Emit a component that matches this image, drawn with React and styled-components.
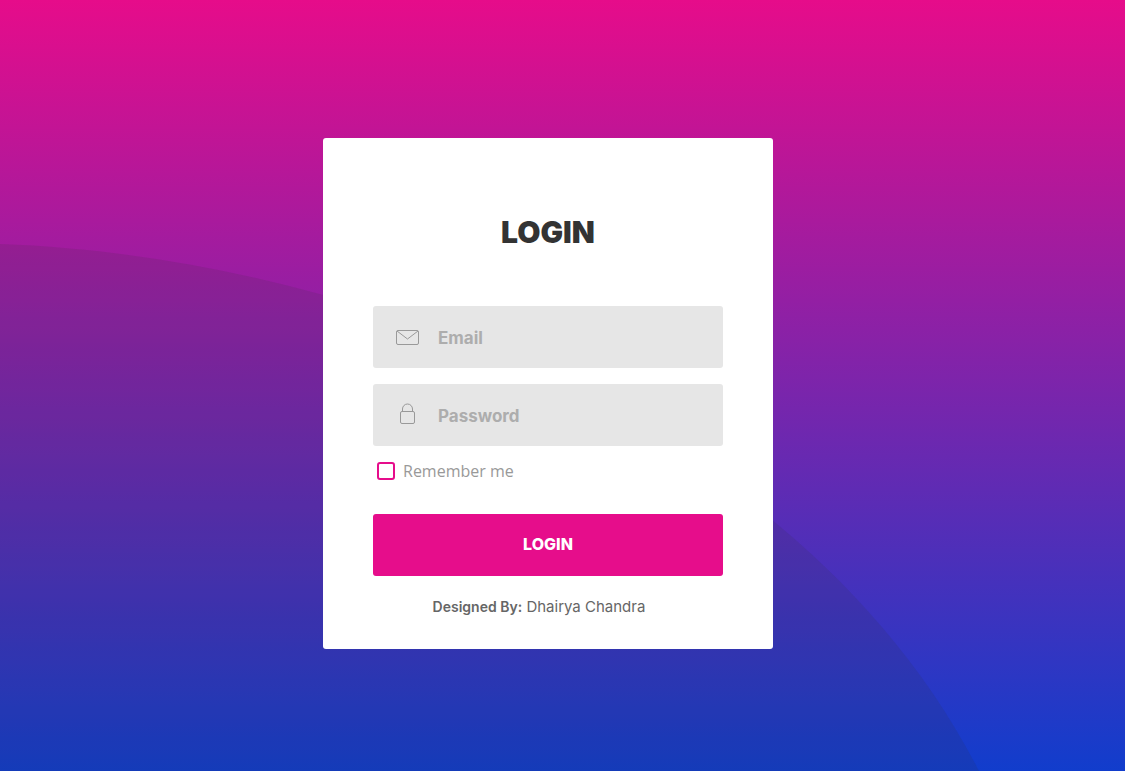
import React, { useState } from "react";
import styled, { createGlobalStyle } from "styled-components";

const GlobalStyle = createGlobalStyle`
  * {
    box-sizing: border-box;
  }

  body {
    margin: 0;
    font-family: Inter, "Liberation Sans", sans-serif;
  }
`;

const Page = styled.main`
  position: relative;
  display: flex;
  align-items: center;
  justify-content: center;
  min-height: 100vh;
  padding: 16px 29px 0 0;
  background: linear-gradient(to bottom, #e60c8a, #113dcc);
`;

const Wave = styled.svg`
  position: absolute;
  inset: 0;
  width: 100%;
  height: 100%;
`;

const Card = styled.form`
  position: relative;
  width: 100%;
  max-width: 450px;
  padding: 50px 50px 31px;
  background-color: #fff;
  border-radius: 3px;
`;

const Title = styled.h1`
  margin: 0 0 30px;
  color: #333;
  font-size: 30px;
  font-weight: 900;
  line-height: 88px;
  text-align: center;
`;

const Field = styled.label`
  display: flex;
  align-items: center;
  gap: 18px;
  height: 62px;
  margin-bottom: 16px;
  padding: 0 23px;
  background-color: #e6e6e6;
  border-radius: 3px;
`;

const FieldIcon = styled.svg`
  flex: none;
  width: 24px;
  height: 24px;
  fill: none;
  stroke: #999;
`;

const FieldInput = styled.input`
  flex: 1;
  min-width: 0;
  height: 100%;
  padding: 2px 0 0;
  border: none;
  outline: none;
  background: transparent;
  color: #666;
  font-family: inherit;
  font-size: 17px;
  font-weight: 700;

  &::placeholder {
    color: #adadad;
    opacity: 1;
  }
`;

const Remember = styled.label`
  display: flex;
  align-items: center;
  gap: 8px;
  height: 18px;
  margin-bottom: 34px;
  padding-left: 4px;
  color: #999;
  font-family: "Open Sans", sans-serif;
  font-size: 16px;
`;

const CheckBox = styled.input`
  appearance: none;
  width: 18px;
  height: 18px;
  margin: 0;
  border: 2px solid #e60d8b;
  border-radius: 3px;

  &:checked {
    background-color: #e60d8b;
  }
`;

const LoginButton = styled.button`
  display: block;
  width: 100%;
  height: 62px;
  padding: 0 0 2px;
  border: none;
  border-radius: 3px;
  background-color: #e60d8b;
  color: #fff;
  font-family: inherit;
  font-size: 16px;
  font-weight: 800;
  cursor: pointer;
`;

const Credit = styled.p`
  margin: 20px 0 0;
  padding-right: 18px;
  color: #666;
  font-size: 15px;
  line-height: 22px;
  text-align: center;

  strong {
    font-size: 14px;
    font-weight: 600;
  }
`;

function App() {
  const [Email, setEmail] = useState("");
  const [Password, setPassword] = useState("");
  const [RememberMe, setRememberMe] = useState(false);

  const onSubmitHandler = (event) => {
    event.preventDefault();
  };

  return (
    <Page>
      <GlobalStyle />
      <Wave viewBox="0 0 1125 771" preserveAspectRatio="none" aria-hidden="true">
        <path
          d="M0 244C350 256 801 424 979 771H0Z"
          fill="#333"
          fillOpacity="0.12"
        />
      </Wave>

      <Card onSubmit={onSubmitHandler}>
        <Title>LOGIN</Title>

        <Field>
          <FieldIcon viewBox="0 0 24 24" aria-hidden="true">
            <rect x="0.5" y="5.5" width="22" height="14" rx="1.5" />
            <path d="M1 6l10.5 8L22 6" />
          </FieldIcon>
          <FieldInput
            type="email"
            placeholder="Email"
            aria-label="Email"
            value={Email}
            onChange={(event) => setEmail(event.currentTarget.value)}
          />
        </Field>

        <Field>
          <FieldIcon viewBox="0 0 24 24" aria-hidden="true">
            <rect x="4.5" y="8.5" width="14" height="12" rx="1.5" />
            <path d="M6.5 8.5V6a5 5 0 0 1 10 0v2.5" />
          </FieldIcon>
          <FieldInput
            type="password"
            placeholder="Password"
            aria-label="Password"
            value={Password}
            onChange={(event) => setPassword(event.currentTarget.value)}
          />
        </Field>

        <Remember>
          <CheckBox
            type="checkbox"
            checked={RememberMe}
            onChange={(event) => setRememberMe(event.currentTarget.checked)}
          />
          Remember me
        </Remember>

        <LoginButton type="submit">LOGIN</LoginButton>

        <Credit>
          <strong>Designed By:</strong> Dhairya Chandra
        </Credit>
      </Card>
    </Page>
  );
}

export default App;
